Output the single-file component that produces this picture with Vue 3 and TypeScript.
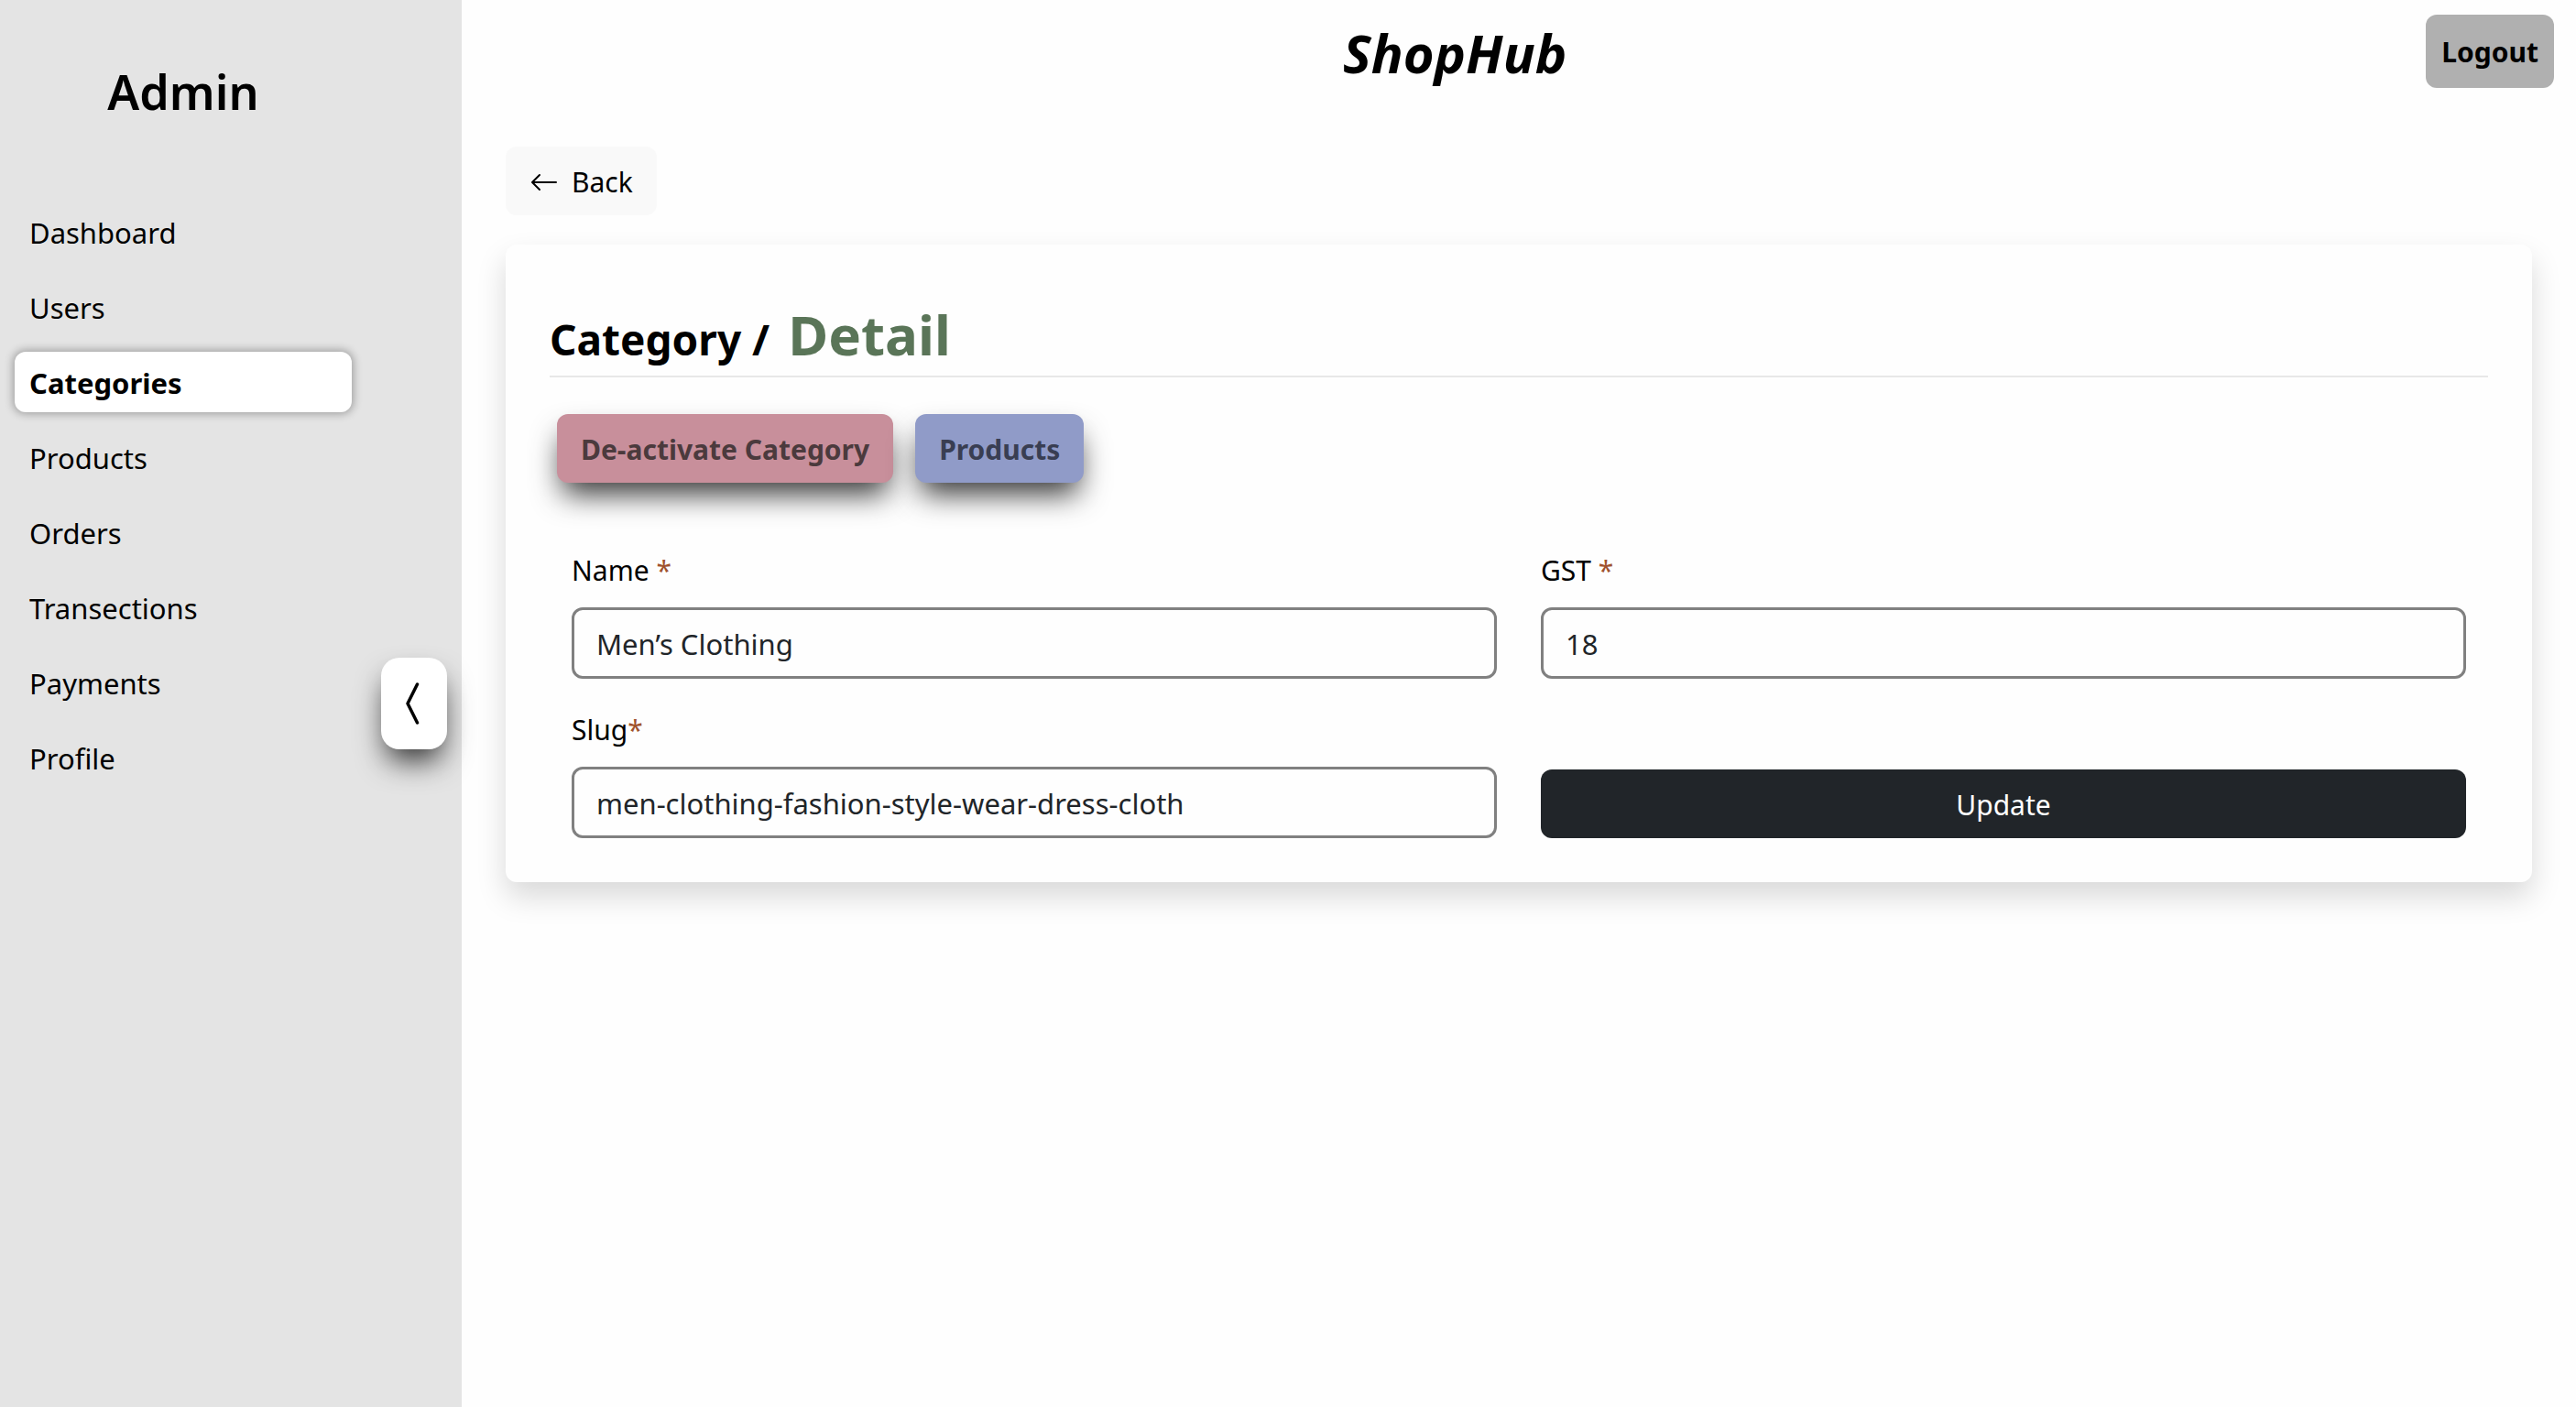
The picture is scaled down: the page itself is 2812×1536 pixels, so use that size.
<script setup lang="ts">
import { reactive, ref } from 'vue'

const links: string[] = [
  'Dashboard',
  'Users',
  'Categories',
  'Products',
  'Orders',
  'Transections',
  'Payments',
  'Profile',
]
const active = ref<string>('Categories')

interface CategoryForm {
  name: string
  gst: string
  slug: string
}

const form = reactive<CategoryForm>({
  name: 'Men’s Clothing',
  gst: '18',
  slug: 'men-clothing-fashion-style-wear-dress-cloth',
})
</script>

<template>
  <div class="layout">
    <aside class="sidebar">
      <div class="menu">
        <h2 class="menu-title">Admin</h2>
        <nav class="nav">
          <a
            v-for="link in links"
            :key="link"
            href="#"
            class="nav-link"
            :class="{ active: link === active }"
            @click.prevent="active = link"
            >{{ link }}</a
          >
        </nav>
      </div>
      <button type="button" class="toggle shadow-strong" aria-label="Collapse sidebar">
        <svg viewBox="0 0 16 16" aria-hidden="true">
          <path
            d="M9.224 1.553a.5.5 0 0 1 .223.67L6.56 8l2.888 5.776a.5.5 0 1 1-.894.448l-3-6a.5.5 0 0 1 0-.448l3-6a.5.5 0 0 1 .67-.223z"
          />
        </svg>
      </button>
    </aside>

    <div class="main">
      <header class="topbar">
        <span></span>
        <h1 class="brand">ShopHub</h1>
        <button type="button" class="logout">Logout</button>
      </header>

      <main class="content">
        <button type="button" class="btn back">
          <svg viewBox="0 0 16 16" aria-hidden="true">
            <path
              d="M15 8a.5.5 0 0 0-.5-.5H2.707l3.147-3.146a.5.5 0 1 0-.708-.708l-4 4a.5.5 0 0 0 0 .708l4 4a.5.5 0 0 0 .708-.708L2.707 8.5H14.5A.5.5 0 0 0 15 8z"
            />
          </svg>
          Back
        </button>

        <section class="card">
          <h2 class="heading">
            <span>Category /</span>
            <span class="heading-accent">Detail</span>
          </h2>

          <div class="actions">
            <button type="button" class="btn action danger shadow-strong">
              De-activate Category
            </button>
            <button type="button" class="btn action info shadow-strong">Products</button>
          </div>

          <form class="form" @submit.prevent>
            <div class="field">
              <label for="name">Name <span class="required">*</span></label>
              <input id="name" v-model="form.name" type="text" />
            </div>
            <div class="field">
              <label for="gst">GST <span class="required">*</span></label>
              <input id="gst" v-model="form.gst" type="text" />
            </div>
            <div class="field">
              <label for="slug">Slug<span class="required">*</span></label>
              <input id="slug" v-model="form.slug" type="text" />
            </div>
            <button type="submit" class="btn update">Update</button>
          </form>
        </section>
      </main>
    </div>
  </div>
</template>

<style>
body {
  margin: 0;
  background: #fefefe;
}
</style>

<style scoped>
.layout {
  display: flex;
  min-height: 100vh;
  font-family: 'Segoe UI', 'Noto Sans', sans-serif;
  font-size: 31px;
  line-height: 48px;
  color: #000;
}

.layout *,
.layout {
  box-sizing: border-box;
}

button,
input {
  font: inherit;
  color: inherit;
}

button {
  border: 0;
  cursor: pointer;
}

h1,
h2 {
  margin: 0;
}

.sidebar {
  display: flex;
  flex: none;
  justify-content: space-between;
  width: 504px;
  padding: 0 16px;
  background: #e4e4e4;
}

.menu {
  width: 368px;
  padding-top: 60px;
}

.menu-title {
  font-size: 52px;
  font-weight: 600;
  line-height: 80px;
  text-align: center;
}

.nav {
  display: flex;
  flex-direction: column;
  gap: 16px;
  margin-top: 80px;
}

.nav-link {
  padding: 10px 16px 8px;
  border-radius: 12px;
  color: #000;
  text-decoration: none;
}

.nav-link.active {
  background: #fff;
  font-weight: 700;
  box-shadow: 0 0 10px 2px rgba(0, 0, 0, 0.3);
}

.shadow-strong {
  box-shadow: 0 18px 32px -6px rgba(0, 0, 0, 0.8);
}

.toggle {
  display: flex;
  align-self: center;
  padding: 22px 8px;
  border-radius: 20px;
  background: #fff;
}

.toggle svg {
  width: 56px;
  height: 56px;
}

.main {
  flex: 1;
  min-width: 0;
}

.topbar {
  display: flex;
  align-items: flex-start;
  justify-content: space-between;
  padding: 16px 24px 0;
}

.brand {
  font-size: 58px;
  font-style: italic;
  font-weight: 700;
  line-height: 84px;
}

.logout {
  padding: 17px 17px 15px;
  border-radius: 12px;
  background: #b0b0b0;
  font-size: 30px;
  font-weight: 700;
}

.content {
  display: flex;
  flex-direction: column;
  align-items: flex-start;
  gap: 32px;
  padding: 60px 48px;
}

.btn {
  padding: 15px 26px 13px;
  border-radius: 12px;
  font-size: 30px;
  line-height: 47px;
}

.back {
  display: flex;
  align-items: center;
  gap: 14px;
  background: #f9f9f9;
}

.back svg {
  width: 32px;
  height: 32px;
}

.card {
  align-self: stretch;
  padding: 48px;
  border-radius: 12px;
  background: #fefefe;
  box-shadow: 0 16px 32px rgba(0, 0, 0, 0.15);
}

.heading {
  display: flex;
  align-items: baseline;
  gap: 20px;
  padding: 12px 0 2px;
  border-bottom: 2px solid #e8e8e8;
  font-size: 46px;
  font-weight: 700;
  line-height: 76px;
}

.heading-accent {
  color: #5a7558;
  font-size: 60px;
}

.actions {
  display: flex;
  gap: 24px;
  padding: 40px 8px 0;
}

.action {
  font-weight: 700;
}

.danger {
  background: #c88f9b;
  color: #4b3a3d;
}

.info {
  background: #909bc8;
  color: #393e52;
}

.form {
  display: grid;
  grid-template-columns: 1fr 1fr;
  align-items: end;
  gap: 32px 48px;
  padding: 72px 24px 0;
}

.field {
  display: flex;
  flex-direction: column;
  gap: 16px;
  min-width: 0;
}

.field label {
  font-size: 30px;
}

.required {
  color: #a0522d;
}

.field input {
  width: 100%;
  padding: 13px 24px 11px;
  border: 3px solid #808080;
  border-radius: 12px;
  background: #fefefe;
  color: #212529;
}

.update {
  background: #212529;
  color: #fff;
}
</style>
